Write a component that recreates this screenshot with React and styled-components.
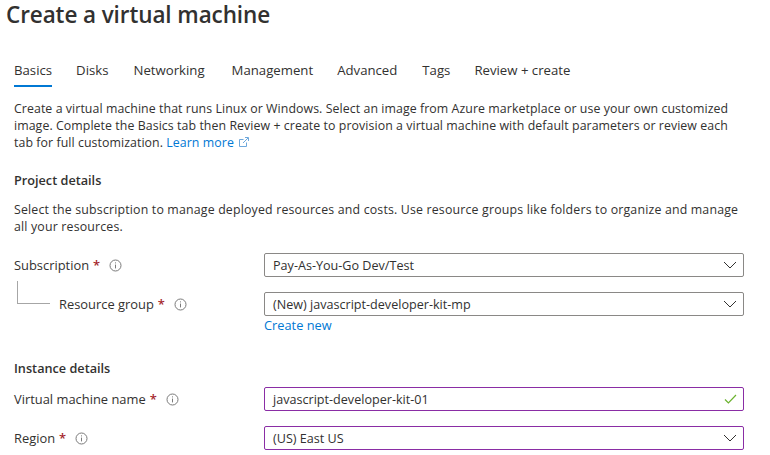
import styled, { createGlobalStyle } from 'styled-components';

const GlobalStyle = createGlobalStyle`
  html, body {
    margin: 0;
    padding: 0;
    background: #ffffff;
    overflow: hidden;
  }
  body {
    font-family: "Open Sans", "Noto Sans", "Liberation Sans", sans-serif;
    color: #323130;
    font-size: 13px;
  }
`;

const Page = styled.div`
  width: 770px;
  height: 455px;
  overflow: hidden;
`;

const Title = styled.h1`
  margin: 0;
  padding: 0 0 0 6px;
  height: 29px;
  font-size: 22.5px;
  line-height: 29px;
  font-weight: 600;
  color: #323130;
  letter-spacing: -0.1px;
`;

const Content = styled.div`
  padding: 0 26px 0 14px;
`;

const Tabs = styled.nav`
  display: flex;
  margin-top: 30px;
  height: 29px;
`;

const Tab = styled.a`
  margin-right: ${(p) => p.$gap}px;
  height: 28px;
  line-height: 23px;
  font-size: 13.2px;
  color: #323130;
  border-bottom: ${(p) => (p.$active ? '2px solid #0078d4' : '2px solid transparent')};
  box-sizing: border-box;
`;

const Text = styled.p`
  margin: ${(p) => p.$top}px 0 0;
  width: 740px;
  font-size: 12.35px;
  line-height: 17px;
  letter-spacing: ${(p) => p.$spacing}px;
  white-space: nowrap;
  color: #323130;
`;

const Link = styled.a`
  color: #0078d4;
`;

const SectionTitle = styled.h2`
  margin: ${(p) => p.$top}px 0 0;
  font-size: 12.7px;
  line-height: 18px;
  font-weight: 600;
  color: #323130;
`;

const Row = styled.div`
  display: flex;
  align-items: center;
  margin-top: ${(p) => p.$top}px;
  height: 24px;
`;

const LabelCell = styled.div`
  position: relative;
  width: 250px;
  flex: none;
  display: flex;
  align-items: center;
  padding-left: ${(p) => (p.$nested ? 45 : 0)}px;
  box-sizing: border-box;
`;

const Label = styled.label`
  font-size: 12.9px;
  font-weight: 500;
  color: #323130;
`;

const Star = styled.span`
  margin-left: 4px;
  color: #a4262c;
  font-weight: 600;
`;

const Elbow = styled.span`
  position: absolute;
  left: 3px;
  top: -14px;
  width: 32px;
  height: 22px;
  border-left: 1px solid #a6a6a6;
  border-bottom: 1px solid #a6a6a6;
`;

const InfoWrap = styled.span`
  display: inline-flex;
  margin-left: 9px;
  color: #7a7a7a;
`;

const Field = styled.div`
  width: 480px;
  height: 24px;
  box-sizing: border-box;
  display: flex;
  align-items: center;
  justify-content: space-between;
  padding: 0 6px 0 8px;
  border: 1px solid ${(p) => (p.$dirty ? '#8a2da5' : '#8a8886')};
  border-radius: 2px;
  font-size: 12.6px;
  color: #323130;
`;

const CreateNew = styled.a`
  display: block;
  margin: 0 0 0 250px;
  height: 19px;
  line-height: 19px;
  font-size: 12.8px;
  font-weight: 500;
  color: #0078d4;
`;

function InfoIcon() {
  return (
    <InfoWrap>
      <svg width="13" height="13" viewBox="0 0 13 13" fill="none" stroke="currentColor">
        <circle cx="6.5" cy="6.5" r="5.5" />
        <path d="M6.5 5.6v3.8" />
        <path d="M6.5 3.4v1" />
      </svg>
    </InfoWrap>
  );
}

function Chevron() {
  return (
    <svg width="14" height="8" viewBox="0 0 14 8" fill="none" stroke="#323130">
      <path d="M1 1l6 6 6-6" />
    </svg>
  );
}

function Check() {
  return (
    <svg width="13" height="10" viewBox="0 0 13 10" fill="none" stroke="#6bb22e" strokeWidth="1.2">
      <path d="M1 5.5l3.4 3.4L12 1" />
    </svg>
  );
}

function ExternalIcon() {
  return (
    <svg width="10" height="10" viewBox="0 0 10 10" fill="none" stroke="#6ea8dc" style={{ marginLeft: 5 }}>
      <path d="M7.5 5.5v4h-7v-7h4" />
      <path d="M4 6l5-5M6 .5h3.5V4" />
    </svg>
  );
}

function FormRow({ label, value, top, nested, dirty, valid }) {
  return (
    <Row $top={top}>
      <LabelCell $nested={nested}>
        {nested && <Elbow />}
        <Label>
          {label}
          <Star>*</Star>
        </Label>
        <InfoIcon />
      </LabelCell>
      <Field $dirty={dirty}>
        <span>{value}</span>
        {valid ? <Check /> : <Chevron />}
      </Field>
    </Row>
  );
}

export default function App() {
  return (
    <Page>
      <GlobalStyle />
      <Title>Create a virtual machine</Title>
      <Content>
        <Tabs>
          <Tab $active $gap={24}>Basics</Tab>
          <Tab $gap={25}>Disks</Tab>
          <Tab $gap={27}>Networking</Tab>
          <Tab $gap={24}>Management</Tab>
          <Tab $gap={25}>Advanced</Tab>
          <Tab $gap={24}>Tags</Tab>
          <Tab $gap={0}>Review + create</Tab>
        </Tabs>
        <Text $top={12} $spacing={0.07}>
          Create a virtual machine that runs Linux or Windows. Select an image from Azure marketplace or use your own customized
          <br />
          image. Complete the Basics tab then Review + create to provision a virtual machine with default parameters or review each
          <br />
          tab for full customization. <Link>Learn more<ExternalIcon /></Link>
        </Text>
        <SectionTitle $top={20}>Project details</SectionTitle>
        <Text $top={12} $spacing={0.175}>
          Select the subscription to manage deployed resources and costs. Use resource groups like folders to organize and manage
          <br />
          all your resources.
        </Text>
        <FormRow top={18} label="Subscription" value="Pay-As-You-Go Dev/Test" />
        <FormRow top={15} nested label="Resource group" value="(New) javascript-developer-kit-mp" />
        <CreateNew>Create new</CreateNew>
        <SectionTitle $top={24}>Instance details</SectionTitle>
        <FormRow top={10} dirty valid label="Virtual machine name" value="javascript-developer-kit-01" />
        <FormRow top={15} dirty label="Region" value="(US) East US" />
      </Content>
    </Page>
  );
}
